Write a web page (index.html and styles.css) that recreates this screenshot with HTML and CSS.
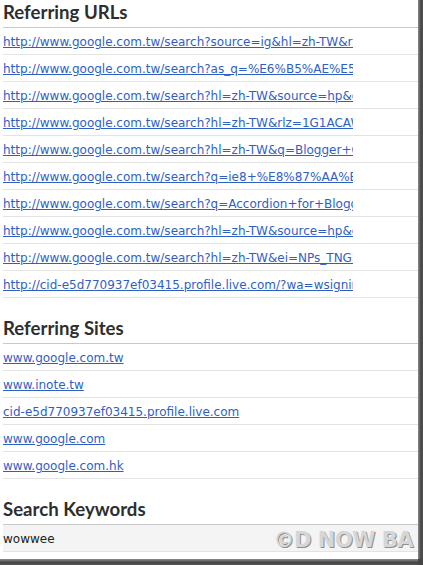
FILE: index.html
```html
<!DOCTYPE html>
<html>
<head>
<meta charset="utf-8">
<link rel="stylesheet" href="styles.css">
</head>
<body>
<div class="screen">
  <div class="page">
    <h2 class="heading first">Referring URLs</h2>
    <ul class="list">
      <li class="row"><a class="url" href="#">http://www.google.com.tw/search?source=ig&amp;hl=zh-TW&amp;rlz=1G1ACAW</a></li>
      <li class="row"><a class="url" href="#">http://www.google.com.tw/search?as_q=%E6%B5%AE%E5%8B%95</a></li>
      <li class="row"><a class="url" href="#">http://www.google.com.tw/search?hl=zh-TW&amp;source=hp&amp;q=</a></li>
      <li class="row"><a class="url" href="#">http://www.google.com.tw/search?hl=zh-TW&amp;rlz=1G1ACAW_ZH</a></li>
      <li class="row"><a class="url" href="#">http://www.google.com.tw/search?hl=zh-TW&amp;q=Blogger+CSS</a></li>
      <li class="row"><a class="url" href="#">http://www.google.com.tw/search?q=ie8+%E8%87%AA%E7%8B%95</a></li>
      <li class="row"><a class="url" href="#">http://www.google.com.tw/search?q=Accordion+for+Blogger</a></li>
      <li class="row"><a class="url" href="#">http://www.google.com.tw/search?hl=zh-TW&amp;source=hp&amp;q=</a></li>
      <li class="row"><a class="url" href="#">http://www.google.com.tw/search?hl=zh-TW&amp;ei=NPs_TNGKE</a></li>
      <li class="row"><a class="url" href="#">http://cid-e5d770937ef03415.profile.live.com/?wa=wsignin1.0</a></li>
    </ul>
    <h2 class="heading">Referring Sites</h2>
    <ul class="list">
      <li class="row"><a class="site" href="#">www.google.com.tw</a></li>
      <li class="row"><a class="site" href="#">www.inote.tw</a></li>
      <li class="row"><a class="site" href="#">cid-e5d770937ef03415.profile.live.com</a></li>
      <li class="row"><a class="site" href="#">www.google.com</a></li>
      <li class="row"><a class="site" href="#">www.google.com.hk</a></li>
    </ul>
    <h2 class="heading">Search Keywords</h2>
    <ul class="list">
      <li class="row keyword">wowwee</li>
    </ul>
    <div class="watermark">©D NOW BA</div>
  </div>
  <div class="shadow-right"></div>
  <div class="shadow-bottom"></div>
  <div class="shadow-corner"></div>
</div>
</body>
</html>
```
FILE: styles.css
```css
html, body {
  margin: 0;
  padding: 0;
  background: #fff;
}
.screen {
  display: grid;
  grid-template-columns: 418px 5px;
  grid-template-rows: 559px 6px;
  width: 423px;
  height: 565px;
  overflow: hidden;
}
.page {
  position: relative;
  background: #fff;
  padding-left: 3px;
  overflow: hidden;
}
.shadow-right {
  background: linear-gradient(to right, #8c8c8c, #444 60%, #555);
}
.shadow-bottom {
  background: linear-gradient(to bottom, #8c8c8c, #444 60%, #555);
}
.shadow-corner {
  background: #444;
}
.heading {
  margin: 18px 0 0 0;
  padding: 0 0 3px 0;
  font-family: Lato, "Open Sans", sans-serif;
  font-weight: 700;
  font-size: 18.6px;
  line-height: 24px;
  color: #2e2e2e;
  border-bottom: 1px solid #c8c8c8;
}
.heading.first {
  margin-top: 0;
}
.list {
  list-style: none;
  margin: 0;
  padding: 0;
}
.row {
  height: 24px;
  padding-top: 2px;
  line-height: 24px;
  border-bottom: 1px solid #e3e3e3;
  font-family: "DejaVu Sans", Verdana, sans-serif;
  font-size: 12px;
}
.row a {
  color: #2f5fc4;
  text-decoration: underline;
}
.url {
  display: block;
  width: 350px;
  overflow: hidden;
  white-space: nowrap;
}
.keyword {
  background: #f4f4f4;
  color: #222;
}
.watermark {
  position: absolute;
  right: 5px;
  bottom: 8px;
  font-family: "DejaVu Sans", sans-serif;
  font-weight: 700;
  font-size: 21px;
  line-height: 22px;
  color: #d6d6d6;
  text-shadow: 1px 1px 0 #8e8e8e, -1px -1px 0 #f2f2f2;
  letter-spacing: -0.5px;
}
```
